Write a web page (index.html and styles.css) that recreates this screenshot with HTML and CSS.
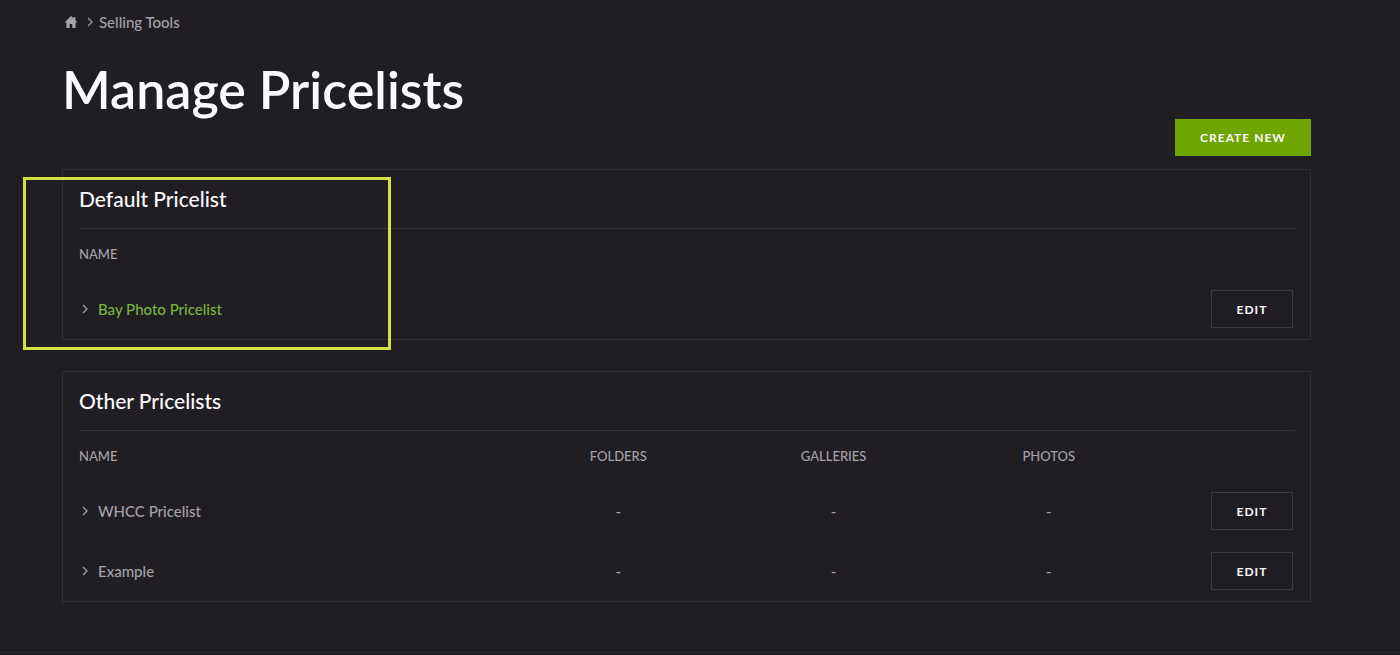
FILE: index.html
```html
<!DOCTYPE html>
<html lang="en">
    <head>
        <meta charset="utf-8">
        <meta name="viewport" content="width=device-width, initial-scale=1.0">
        <title>Manage Pricelists</title>
        <link rel="stylesheet" href="styles.css">
    </head>
    <body>
        <main class="page">
            <nav class="breadcrumb" aria-label="Breadcrumb">
                <a href="#" aria-label="Home">
                    <svg class="home" viewBox="0 0 12 12"><path d="M6 0L8.600 2.500V1H10.400V4.200L12 6V6.600H10.600V12H7.300V8H4.700V12H1.400V6.600H0V6Z"/></svg>
                </a>
                <svg class="chevron" viewBox="0 0 6 10"><path d="M1 1L5 5L1 9"/></svg>
                <a href="#">Selling Tools</a>
            </nav>
            <h1>Manage Pricelists</h1>
            <div class="actions">
                <button class="create">CREATE NEW</button>
            </div>

            <section class="panel">
                <h2>Default Pricelist</h2>
                <table>
                    <thead>
                        <tr>
                            <th class="name">NAME</th>
                            <th class="edit-col"></th>
                        </tr>
                    </thead>
                    <tbody>
                        <tr>
                            <td>
                                <a class="pricelist default" href="#">
                                    <svg class="chevron" viewBox="0 0 6 10"><path d="M1 1L5 5L1 9"/></svg>
                                    Bay Photo Pricelist
                                </a>
                            </td>
                            <td class="edit-col"><button class="edit">EDIT</button></td>
                        </tr>
                    </tbody>
                </table>
                <div class="highlight"></div>
            </section>

            <section class="panel">
                <h2>Other Pricelists</h2>
                <table>
                    <thead>
                        <tr>
                            <th class="name">NAME</th>
                            <th class="count">FOLDERS</th>
                            <th class="count">GALLERIES</th>
                            <th class="count">PHOTOS</th>
                            <th class="edit-col"></th>
                        </tr>
                    </thead>
                    <tbody>
                        <tr>
                            <td>
                                <a class="pricelist" href="#">
                                    <svg class="chevron" viewBox="0 0 6 10"><path d="M1 1L5 5L1 9"/></svg>
                                    WHCC Pricelist
                                </a>
                            </td>
                            <td class="count">-</td>
                            <td class="count">-</td>
                            <td class="count">-</td>
                            <td class="edit-col"><button class="edit">EDIT</button></td>
                        </tr>
                        <tr>
                            <td>
                                <a class="pricelist" href="#">
                                    <svg class="chevron" viewBox="0 0 6 10"><path d="M1 1L5 5L1 9"/></svg>
                                    Example
                                </a>
                            </td>
                            <td class="count">-</td>
                            <td class="count">-</td>
                            <td class="count">-</td>
                            <td class="edit-col"><button class="edit">EDIT</button></td>
                        </tr>
                    </tbody>
                </table>
            </section>
        </main>
        <footer></footer>
    </body>
</html>
```
FILE: styles.css
```css
* {
    box-sizing: border-box;
}
body {
    margin: 0;
    background: #201d23;
    color: #a5a2a8;
    font-family: Lato, "Liberation Sans", sans-serif;
    font-size: 15px;
    font-weight: 500;
    line-height: 20px;
}
a {
    color: inherit;
    text-decoration: none;
}
button {
    padding: 0;
    font-family: inherit;
    font-size: 12px;
    font-weight: bold;
    letter-spacing: 1px;
    color: #fbf9fe;
    cursor: pointer;
}
.page {
    padding: 12px 89px 50px 62px;
}
.breadcrumb {
    display: flex;
    align-items: center;
    gap: 6px;
    padding-left: 3px;
}
.breadcrumb a {
    display: flex;
}
.home {
    width: 12px;
    height: 12px;
    margin-right: 4px;
    fill: currentColor;
}
.chevron {
    width: 6px;
    height: 10px;
    fill: none;
    stroke: #a5a2a8;
    stroke-width: 1.2;
}
h1 {
    margin: 28px 0 0;
    color: #fbf9fe;
    font-size: 52px;
    font-weight: 600;
    line-height: 59px;
}
.actions {
    display: flex;
    justify-content: flex-end;
}
.create {
    width: 136px;
    height: 37px;
    border: 0;
    background: #6fa500;
}
.panel {
    position: relative;
    margin-top: 13px;
    padding: 0 15px 0 16px;
    border: 1px solid #312f35;
}
.panel + .panel {
    margin-top: 31px;
}
h2 {
    margin: 0;
    border-bottom: 1px solid #343238;
    color: #fbf9fe;
    font-size: 21px;
    font-weight: 500;
    line-height: 58px;
}
table {
    width: 100%;
    table-layout: fixed;
    border-collapse: collapse;
}
th, td {
    height: 60px;
    padding: 0;
    text-align: left;
}
th {
    height: 50px;
    font-size: 13px;
    font-weight: 500;
}
.count {
    width: 17.7%;
    text-align: center;
}
.edit-col {
    width: 11.4%;
    padding-right: 2px;
    text-align: right;
}
.pricelist {
    display: flex;
    align-items: center;
    gap: 10px;
    padding-left: 3px;
}
.default {
    color: #79b43c;
}
.edit {
    width: 82px;
    height: 38px;
    border: 1px solid #3b393f;
    background: transparent;
    vertical-align: middle;
}
/* callout around the default pricelist */
.highlight {
    position: absolute;
    top: 7px;
    left: -40px;
    width: 368px;
    height: 173px;
    border: 3px solid #d3e23f;
    pointer-events: none;
}
footer {
    border-top: 1px solid #29262c;
}
```
